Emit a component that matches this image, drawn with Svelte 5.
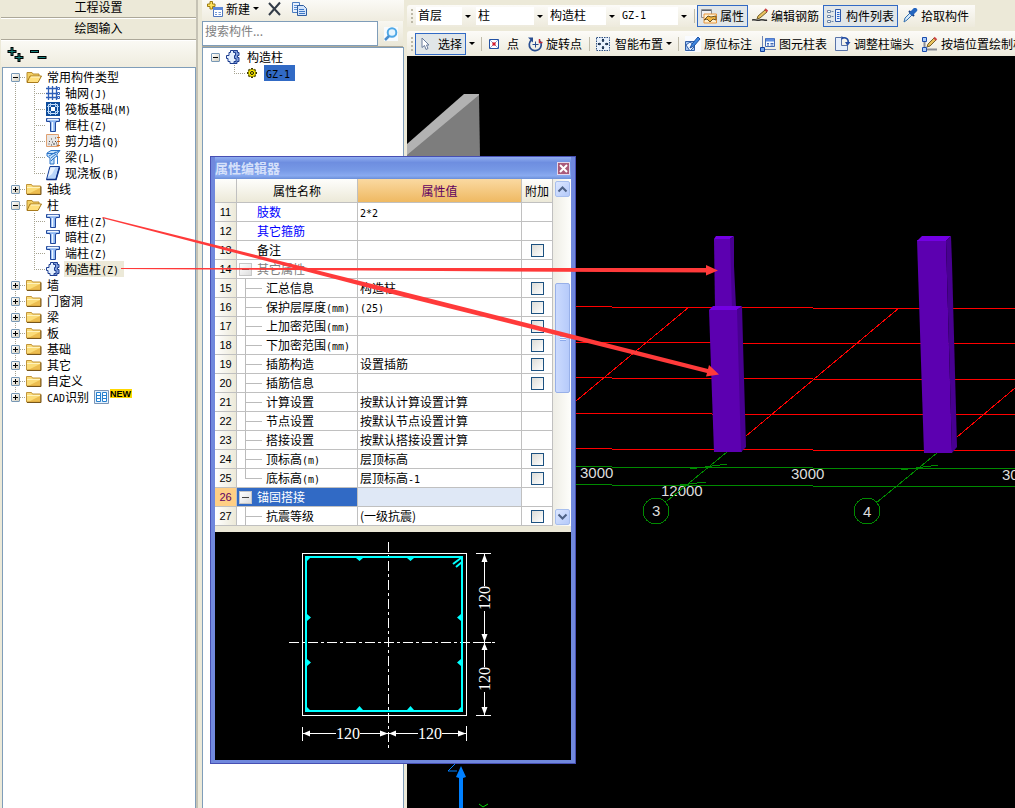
<script lang="ts">
  type Item = { label: string; key?: string; icon: string; selected?: boolean };
  type Group = { label: string; prefix?: string; open?: boolean; isNew?: boolean; children?: Item[] };
  type Row = {
    no: number;
    name: string;
    unit?: string;
    value?: string;
    extra?: string;
    kind?: "link" | "plain" | "group" | "child";
    last?: boolean;
    check?: boolean;
    selected?: boolean;
  };

  const groups: Group[] = [
    {
      label: "常用构件类型",
      open: true,
      children: [
        { label: "轴网", key: "(J)", icon: "grid" },
        { label: "筏板基础", key: "(M)", icon: "raft" },
        { label: "框柱", key: "(Z)", icon: "column" },
        { label: "剪力墙", key: "(Q)", icon: "wall" },
        { label: "梁", key: "(L)", icon: "beam" },
        { label: "现浇板", key: "(B)", icon: "slab" },
      ],
    },
    { label: "轴线" },
    {
      label: "柱",
      open: true,
      children: [
        { label: "框柱", key: "(Z)", icon: "column" },
        { label: "暗柱", key: "(Z)", icon: "column" },
        { label: "端柱", key: "(Z)", icon: "column" },
        { label: "构造柱", key: "(Z)", icon: "struct", selected: true },
      ],
    },
    { label: "墙" },
    { label: "门窗洞" },
    { label: "梁" },
    { label: "板" },
    { label: "基础" },
    { label: "其它" },
    { label: "自定义" },
    { label: "识别", prefix: "CAD", isNew: true },
  ];

  const rows: Row[] = [
    { no: 11, name: "肢数", extra: "2*2", kind: "link" },
    { no: 12, name: "其它箍筋", kind: "link" },
    { no: 13, name: "备注", kind: "plain", check: true },
    { no: 14, name: "其它属性", kind: "group" },
    { no: 15, name: "汇总信息", value: "构造柱", kind: "child", check: true },
    { no: 16, name: "保护层厚度", unit: "(mm)", extra: "(25)", kind: "child", check: true },
    { no: 17, name: "上加密范围", unit: "(mm)", kind: "child", check: true },
    { no: 18, name: "下加密范围", unit: "(mm)", kind: "child", check: true },
    { no: 19, name: "插筋构造", value: "设置插筋", kind: "child", check: true },
    { no: 20, name: "插筋信息", kind: "child", check: true },
    { no: 21, name: "计算设置", value: "按默认计算设置计算", kind: "child" },
    { no: 22, name: "节点设置", value: "按默认节点设置计算", kind: "child" },
    { no: 23, name: "搭接设置", value: "按默认搭接设置计算", kind: "child" },
    { no: 24, name: "顶标高", unit: "(m)", value: "层顶标高", kind: "child", check: true },
    { no: 25, name: "底标高", unit: "(m)", value: "层顶标高", extra: "-1", kind: "child", last: true, check: true },
    { no: 26, name: "锚固搭接", kind: "group", selected: true },
    { no: 27, name: "抗震等级", value: "(一级抗震)", kind: "child", check: true },
  ];

  const combos = [
    { label: "楼层", value: "首层", size: "short" },
    { label: "构件类别", value: "柱", size: "" },
    { label: "构件类型", value: "构造柱", size: "" },
    { label: "构件", value: "GZ-1", size: "code" },
  ];
</script>

{#snippet icon(name: string)}
  <svg class="icon" width="16" height="16" viewBox="0 0 16 16" aria-hidden="true">
    {#if name === "open"}
      <path d="M1 13V3.500h5l1 1.500h6v3" fill="#f3cf63" stroke="#b98d2e" />
      <path d="M1 13.500 4 7h11.500L12 13.500z" fill="#ffdf7c" stroke="#a87a1c" />
      <path d="M5 8h9" stroke="#fff7ce" />
    {:else if name === "folder"}
      <path d="M.5 13V3.500h5l1 1.500H14.500V13z" fill="#fbdc78" stroke="#c1943a" />
      <path d="M1 6.500h13" stroke="#fff3bd" />
      <path d="M14 7v6H2z" fill="#e2a836" opacity=".6" />
      <path d="M1 13.500h14v-8" fill="none" stroke="#77551a" />
    {:else if name === "grid"}
      <path d="M0 3.500h11M0 8.500h11M0 12.500h11M2.500 1v14M6.500 1v14M10.500 1v14" stroke="#2f5fb8" stroke-width="1.300" />
      <path d="M11.500 2.500h2v2h-2zM11.500 7.500h2v2h-2zM11.500 11.500h2v2h-2z" fill="#fff" stroke="#2f5fb8" />
    {:else if name === "raft"}
      <path d="M0 1h14v14H0z" fill="#0e4d9c" />
      <path d="M2.500 3.500h9v9h-9z" fill="none" stroke="#cfe4fb" />
      <path d="M5 6h4v4H5z" fill="#fff" />
      <path d="M4.500 2v4M9.500 2v4M4.500 10v4M9.500 10v4M1 5.500h4M1 10.500h4M9 5.500h4M9 10.500h4" stroke="#a9cdf4" />
    {:else if name === "column"}
      <path d="M.5 1.500h13v3H10v1H9.500v9h-5v-9H4v-1H.5z" fill="#8db7f3" stroke="#20479b" />
      <path d="M1.500 2.500h11M6.500 5v9" stroke="#eff6ff" stroke-width="1.500" />
    {:else if name === "wall"}
      <path d="M.5 1.500h12v12H.5z" fill="#e9e6e4" stroke="#e0a070" />
      <path d="M2.500 11h1M5 12h1M8 11h1M3 8.500h1M6 9h1M9 8.500h1M10.500 12h1M5 6h1M9 5h1M7 11h1M10 10h1" stroke="#444" />
      <path d="M11 4.500h3M11 8.500h3M11 12.500h3" stroke="#d06c22" />
    {:else if name === "beam"}
      <path d="M1 4 5 1.500h9L11 5v2L8 9v6H4V9L1 7z" fill="#c4e1fb" stroke="#2d75c9" />
      <path d="M1 4.500h7l5-2.500M3 7l7-4M5 9l5-4M5 12l3-3M11.500 7v8" stroke="#2d75c9" fill="none" />
    {:else if name === "slab"}
      <path d="M4 1.500h9.500L10 14.500H.5z" fill="#b9d4fa" stroke="#163f97" />
      <path d="M4.500 2.500h5L6 9l-4 3z" fill="#fff" opacity=".7" />
      <path d="M.5 14.500H10l3.500-12" fill="none" stroke="#0b2d85" stroke-width="1.500" />
    {:else if name === "struct"}
      <path d="M6 3.500h1.500V1.500h4v2H13v3h-1.500v2H13v4h-2v2H8" fill="#7f9ddb" stroke="#1d3d8f" />
      <path d="M3 3.500h1.500v-2h3v2h2v3H8.500v3h1.500v3h-2v2h-4v-2H2v-3H.5v-3H3z" fill="#e5f0fe" stroke="#1d3d8f" />
    {:else if name === "gear"}
      <path d="M6 3v10M1 8h10M2.500 4.500l7 7M9.500 4.500l-7 7" stroke="#3a3600" stroke-width="2" />
      <circle cx="6" cy="8" r="3.700" fill="#ffef00" stroke="#8a8000" />
      <circle cx="6" cy="8" r="1.500" fill="#ffef00" stroke="#111" />
    {:else if name === "new"}
      <path d="M6.500 6.500h9v9h-9z" fill="#fff" stroke="#4f75bd" />
      <path d="M6 6h10v3H6z" fill="#5d88d8" />
      <path d="M8 11.500h2M11.500 11.500h2.500M8 13.500h2M11.500 13.500h2.500" stroke="#7197d8" />
      <path d="M3 .5h2.500V3H8v2.500H5.500V8H3V5.500H.5V3H3z" fill="#ffe35b" stroke="#9c7b11" />
    {:else if name === "delete"}
      <path d="M2 2l11 12M13 1.500 2 14" stroke="#333c48" stroke-width="2" />
    {:else if name === "copy"}
      <path d="M1.500 1.500h7v10h-7z" fill="#e8f1fd" stroke="#4b7cc0" />
      <path d="M3 4.500h4M3 6.500h3M3 8.500h3" stroke="#5f91d4" />
      <path d="M6.500 4.500h6l3 3v7h-9z" fill="#d4e5fb" stroke="#2f5d9f" />
      <path d="M8 8.500h5M8 10.500h6M8 12.500h6" stroke="#3f78c5" />
    {:else if name === "search"}
      <path d="M1 1h14v14H1z" fill="#f7fbff" />
      <circle cx="9" cy="6.500" r="4.300" fill="#e6f5ff" stroke="#4fa8e6" stroke-width="2" />
      <path d="M6 10l-4 4" stroke="#4a8fce" stroke-width="2.500" />
    {:else if name === "props"}
      <path d="M.5 1.500h10v8H.5z" fill="#eef0f2" stroke="#8c8f94" />
      <path d="M1 2.500h9" stroke="#5b6067" />
      <path d="M3 6h12.500v9H3z" fill="#fff0cf" stroke="#e9963c" />
      <path d="M3 12l4-4 3 1 5-1v4l-3-1-3 3-3-3z" fill="#f4b63f" stroke="#6f5323" />
    {:else if name === "pencil"}
      <path d="M0 12c3-1 5 1 8 0s5 1 7 0" fill="none" stroke="#333" stroke-width="1.500" />
      <path d="M5 11l1-3 7-6 2 2-7 6z" fill="#e9c25d" stroke="#76602c" />
      <path d="M13 1l2.500 2.500" stroke="#c44" stroke-width="2" />
    {:else if name === "list"}
      <path d="M.5 2.500h3v2h-3zM.5 7.500h3v2h-3zM.5 12.500h3v2h-3z" fill="#fff" stroke="#6e86a8" />
      <path d="M4.500 3.500h2M4.500 8.500h2M4.500 13.500h2" stroke="#6e86a8" />
      <path d="M8.500 1.500h5v12h-5z" fill="#e8f0fd" stroke="#2b57ab" />
      <path d="M10 4.500h2.500M10 6.500h2.500M10 8.500h2.500M10 10.500h2.500" stroke="#2b65c9" />
    {:else if name === "dropper"}
      <path d="M2 14l1-4 6-6 2 2-6 6z" fill="#d5e9fa" stroke="#3671ae" />
      <path d="M7 3l5 5" stroke="#163e80" stroke-width="2" />
      <path d="M10 5l3-3" stroke="#2466c0" stroke-width="4.500" stroke-linecap="round" />
    {:else if name === "cursor"}
      <path d="M3 2v9.500l2.500-2 1.500 4 2-1-1.500-3.500H10z" fill="#fff" stroke="#6a7c9c" />
    {:else if name === "point"}
      <path d="M1.500 3.500h9v9h-9z" fill="#fff" stroke="#2351a3" />
      <path d="M2 4l8 8M10 4l-8 8" stroke="#8fa9d8" />
      <path d="M4.500 6.500l3 3M7.500 6.500l-3 3" stroke="#d3192b" stroke-width="1.500" />
    {:else if name === "rotate"}
      <path d="M4.500 4a6 6 0 1 0 8.500 1" fill="none" stroke="#294e91" stroke-width="1.700" />
      <path d="M1 1.500h5v5z" fill="#294e91" />
      <path d="M8.500 5.500v6M5.500 8.500h6" stroke="#294e91" />
      <path d="M12.500 3v3.500h3" fill="none" stroke="#bf2b35" stroke-width="1.500" />
    {:else if name === "smart"}
      <path d="M.5 1.500h13v13h-13z" fill="#e9f2fd" stroke="#2c4f83" stroke-dasharray="1.500 1" />
      <path d="M7 3v3M7 10v3M2 8h3M9 8h3" stroke="#102847" stroke-width="1.500" />
      <path d="M5.500 4.500 7 2.500l1.500 2zM5.500 11.500 7 13.500l1.500-2zM3.500 6.500 1.500 8l2 1.500zM10.500 6.500l2 1.500-2 1.500z" fill="#102847" />
    {:else if name === "label"}
      <path d="M0 0h16v16H0z" fill="#f9fbff" />
      <path d="M.5 5.500h9v9h-9z" fill="#a5c6f2" stroke="#315fa8" />
      <path d="M1 9l4-3 5 4-5 5z" fill="#eff6ff" stroke="#315fa8" />
      <path d="M5 12l2-4 6-7 2 2-6 7z" fill="#3d86e0" stroke="#1b4fa0" />
    {:else if name === "colTable"}
      <path d="M2.500 0v15M0 13.500h16" stroke="#7086b5" />
      <path d="M5.500 2.500h9v8h-9z" fill="#f7faff" stroke="#4169b4" />
      <path d="M6 4h8" stroke="#5f8de0" stroke-width="3" />
      <path d="M7 7.500h2M10.500 7.500h3M7 9h2M10.500 9h3" stroke="#4169b4" />
      <path d="M.5 11.500h4v4h-4z" fill="#74a7ee" stroke="#123f9b" />
    {:else if name === "adjust"}
      <path d="M.5 1.500h6v8h6v5H.5z" fill="#e7effb" stroke="#5973a8" />
      <path d="M7 2c4-1 7 1 6 5" fill="none" stroke="#1f49a0" stroke-width="1.500" />
      <path d="M10 6h5.500L12.500 10zM6.500 0v4L9 2z" fill="#284fa5" />
    {:else if name === "draw"}
      <path d="M2.500 1v14M1 13.500h14" stroke="#8b8e95" stroke-width="2" />
      <path d="M.5 1.500h4v4h-4zM.5 11.500h4v4h-4z" fill="#acd0fa" stroke="#1b4bac" />
      <path d="M5 11l1-3 6-6 2 2-6 6z" fill="#e9c25d" stroke="#76602c" />
      <path d="M12 1.500l2.500 2.500" stroke="#c44" stroke-width="2" />
    {/if}
  </svg>
{/snippet}

{#snippet tool(name: string, label: string, state: string)}
  <button class="tool {state}">{@render icon(name)}<span>{label}</span></button>
{/snippet}

<main class="app">
  <aside class="nav">
    <button class="tab">工程设置</button>
    <button class="tab second">绘图输入</button>
    <div class="nav-tools">
      <button aria-label="全部展开">
        <svg width="18" height="16" viewBox="0 0 18 16">
          <path d="M5 1v9M.5 5.500h9M12 7v9M7.500 11.500h9" stroke="#000" stroke-width="3" />
          <path d="M5 2v7M1.500 5.500h7M12 8v7M8.500 11.500h7" stroke="#16837c" />
        </svg>
      </button>
      <button aria-label="全部折叠">
        <svg width="18" height="16" viewBox="0 0 18 16">
          <path d="M0 5.500h9M7.500 11.500h9" stroke="#000" stroke-width="3" />
          <path d="M1 5.500h7M8.500 11.500h7" stroke="#16837c" />
        </svg>
      </button>
    </div>
    <div class="box">
      <ul class="tree root">
        {#each groups as group}
          <li>
            <div class="node">
              <button class="toggle" class:closed={!group.open} aria-label={group.label}></button>
              <i class="dash"></i>
              {@render icon(group.open ? "open" : "folder")}
              <span class="label">{#if group.prefix}<span class="latin">{group.prefix}</span>{/if}{group.label}</span>
              {#if group.isNew}
                <svg class="new-mark" width="38" height="16" viewBox="0 0 38 16" role="img">
                  <path d="M.5 1.500h14v13H.5z" fill="#e3f1fd" stroke="#7a94b5" />
                  <path d="M2.500 3.500h4v9h-4zM8.500 3.500h4v9h-4z" fill="#fff" stroke="#2580cf" />
                  <path d="M3 6.500h3M3 9.500h3M9 6.500h3M9 9.500h3" stroke="#2580cf" />
                  <path d="M16 0h22v9H16z" fill="#ffd800" />
                  <text x="16" y="8">NEW</text>
                </svg>
              {/if}
            </div>
            {#if group.children}
              <ul class="branch-list">
                {#each group.children as item}
                  <li class="node leaf">
                    <i class="dash"></i>
                    {@render icon(item.icon)}
                    <span class="label" class:current={item.selected}>{item.label}<span class="latin">{item.key}</span></span>
                  </li>
                {/each}
              </ul>
            {/if}
          </li>
        {/each}
      </ul>
    </div>
  </aside>

  <section class="parts">
    <div class="parts-tools">
      <button>{@render icon("new")}<span>新建</span><i class="caret"></i></button>
      <button aria-label="删除">{@render icon("delete")}</button>
      <button aria-label="复制">{@render icon("copy")}</button>
    </div>
    <div class="search">
      <input type="text" placeholder="搜索构件..." aria-label="搜索构件" />
      <button aria-label="搜索">{@render icon("search")}</button>
    </div>
    <div class="box">
      <ul class="tree">
        <li>
          <div class="node">
            <button class="toggle" aria-label="构造柱"></button>
            <i class="dash none"></i>
            {@render icon("struct")}
            <span class="label">构造柱</span>
          </div>
          <ul class="branch-list">
            <li class="node leaf">
              <i class="dash"></i>
              {@render icon("gear")}
              <span class="label picked"><span class="latin">GZ-1</span></span>
            </li>
          </ul>
        </li>
      </ul>
    </div>
  </section>

  <section class="work">
    <div class="bar top">
      <i class="grip"></i>
      <div class="combos">
        {#each combos as combo}
          <div class="combo {combo.size}">
            <select aria-label={combo.label}><option>{combo.value}</option></select>
            <i class="arrow"><i class="caret"></i></i>
          </div>
        {/each}
      </div>
      <i class="sep"></i>
      {@render tool("props", "属性", "on")}
      {@render tool("pencil", "编辑钢筋", "")}
      {@render tool("list", "构件列表", "on")}
      {@render tool("dropper", "拾取构件", "")}
    </div>
    <div class="bar">
      <i class="grip"></i>
      {@render tool("cursor", "选择", "on")}
      <button class="more" aria-label="选择方式"><i class="caret"></i></button>
      <i class="sep"></i>
      {@render tool("point", "点", "")}
      {@render tool("rotate", "旋转点", "")}
      <i class="sep"></i>
      {@render tool("smart", "智能布置", "split")}
      <button class="more" aria-label="布置方式"><i class="caret"></i></button>
      <i class="sep"></i>
      {@render tool("label", "原位标注", "")}
      {@render tool("colTable", "图元柱表", "")}
      {@render tool("adjust", "调整柱端头", "")}
      {@render tool("draw", "按墙位置绘制柱", "")}
    </div>
    <svg class="scene" role="img" aria-label="三维视图">
      <g transform="translate(-407 -56)">
        <path d="M407 144 464 94h15v2L407 156z" fill="#b2b2b2" />
        <path d="M479 95l1 62h-73v-2z" fill="#7d7d7d" />

        <g stroke="#f00" shape-rendering="crispEdges">
          <path d="M407 306 1015 309M407 342 1015 344M407 377 1015 380M407 413 1015 415M407 448 1015 451" />
          <path d="M576 401 689 307M746 436 899 308M957 437 1015 388" />
        </g>
        <g class="dims">
          <text x="580" y="478">3000</text>
          <text x="791" y="479">3000</text>
          <text x="1002" y="480">3000</text>
          <text x="661" y="496">12000</text>
          <text x="652" y="516">3</text>
          <text x="863" y="517">4</text>
        </g>
        <g stroke="#008a00" fill="none" shape-rendering="crispEdges">
          <path d="M407 466 1015 469M407 484 1015 487" />
          <path d="M690 469l37-5M672 486l34-4M901 470l37-5" />
          <path d="M727 452 667 501M937 453 876 503" />
          <circle cx="656" cy="511" r="13" />
          <circle cx="867" cy="511" r="13" />
        </g>

        <path d="M714 239h17l3 70h-19z" fill="#5c00b0" />
        <path d="M714 239l2-3h18l-4 3z" fill="#7400e4" />
        <path d="M730 239l4-3v30l2 41-4 2z" fill="#480091" />
        <path d="M709 310h29l4 142h-28z" fill="#5c00b0" />
        <path d="M709 310l4-4h29l-5 4z" fill="#7400e4" />
        <path d="M737 310l5-4 1 37 3 104-5 5z" fill="#480091" />
        <path d="M917 240h29l6 213h-28z" fill="#5c00b0" />
        <path d="M917 241l5-5h29l-5 5z" fill="#7400e4" />
        <path d="M946 241l5-5 1 27 5 184-5 6z" fill="#480091" />

        <path d="M457 762l-9 9h9" fill="none" stroke="#0080ff" />
        <path d="M456 777l5-11 5 11-3 1v30h-4v-30z" fill="#0080ff" />
        <path d="M479 804l4 3 5-3" fill="none" stroke="#0d0" />
      </g>
    </svg>
  </section>

  <section class="dialog" aria-label="属性编辑器">
    <header>
      <h2>属性编辑器</h2>
      <button class="close" aria-label="关闭">
        <svg width="9" height="9" viewBox="0 0 9 9"><path d="M1 1l7 7M8 1 1 8" stroke="#fff" stroke-width="2" /></svg>
      </button>
    </header>
    <div class="sheet">
      <table>
        <thead>
          <tr><th class="no"></th><th class="name">属性名称</th><th class="value">属性值</th><th class="extra">附加</th></tr>
        </thead>
        <tbody>
          {#each rows as row (row.no)}
            <tr class={row.kind} class:selected={row.selected}>
              <th>{row.no}</th>
              <td>
                <div class="cell">
                  {#if row.kind === "group"}
                    <button class="fold" aria-label={row.name}></button>
                  {:else if row.kind === "child"}
                    <i class="twig" class:last={row.last}></i>
                  {/if}
                  <span>{row.name}{#if row.unit}<span class="latin">{row.unit}</span>{/if}</span>
                </div>
              </td>
              <td class="val">{row.value ?? ""}{#if row.extra}<span class="latin">{row.extra}</span>{/if}</td>
              <td class="tick">
                {#if row.check}<input type="checkbox" aria-label="附加 {row.name}" />{/if}
              </td>
            </tr>
          {/each}
        </tbody>
      </table>
      <div class="scroll">
        <button aria-label="向上"><svg width="11" height="8" viewBox="0 0 11 8"><path d="M1.500 6.500l4-4 4 4" /></svg></button>
        <i class="thumb"></i>
        <button aria-label="向下"><svg width="11" height="8" viewBox="0 0 11 8"><path d="M1.500 1.500l4 4 4-4" /></svg></button>
      </div>
    </div>
    <svg class="section" viewBox="215 532 356 228" role="img" aria-label="截面">
      <g fill="none" stroke="#fff" shape-rendering="crispEdges">
        <path d="M302.500 553.500h164v162h-164z" />
        <path d="M388.500 542v206M289 642.500h207" stroke-dasharray="10 3 3 3" />
        <path d="M302.500 727v14M466.500 726v15M303 733.500h33M360 733.500h58M442 733.500h24" />
        <path d="M476 553.500h15M476 715.500h15M484.500 554v32M484.500 611v56M484.500 692v23M476 642.500h15" />
      </g>
      <path fill="#fff" d="M303 733.500l7-3v6zM388 733.500l-8-3v6zM389 733.500l7-3v6zM466 733.500l-8-3v6zM484.500 554l-3 8h6zM484.500 642l-3-8h6zM484.500 643l-3 7h6zM484.500 715l-3-8h6z" />
      <path d="M306 557h156v154H306z" fill="none" stroke="#0ff" stroke-width="2" />
      <path d="M453 564l8-6M456 567l6-5" stroke="#0ff" stroke-width="2" />
      <path fill="#0ff" d="M306 557h5l-5 5zM306 711h5l-5-5zM462 711h-5l5-5zM356 558h7l-3.500 3zM407 558h7l-3.500 3zM356 710h7l-3.500-4zM407 710h7l-3.500-4zM307 614v7l4-3.500zM307 659v7l4-3.500zM461 614v7l-4-3.500zM461 659v7l-4-3.500z" />
      <text x="336" y="739">120</text>
      <text x="418" y="739">120</text>
      <text transform="translate(490 610) rotate(-90)">120</text>
      <text transform="translate(490 691) rotate(-90)">120</text>
    </svg>
  </section>

  <svg class="marks" aria-hidden="true">
    <path d="M121 268h319l266 0v-3l12 5.500-12 5v-3l-266-1.500-319-2z" />
    <path d="M103 217 400 291l308 78 1-4 10 9.500-13 2 1-3.500L400 296 102 218z" />
  </svg>
</main>

<style>
  :global(body) { margin: 0; background: #ece9d8; }

  .app {
    --face: #ece9d8;
    --line: #aca899;
    --edge: #7f9db9;
    position: relative;
    display: grid;
    grid-template-columns: 198px 206px 1fr;
    height: 100vh;
    min-height: 768px;
    overflow: hidden;
    background: var(--face);
    color: #000;
    font: 12px/16px "Noto Sans CJK SC", sans-serif;
  }
  button { margin: 0; padding: 0; border: 0; background: none; color: inherit; font: inherit; }
  ul { list-style: none; margin: 0; padding: 0; }
  .latin { font-family: "DejaVu Sans Mono", monospace; font-size: 10px; line-height: 10px; }
  .icon { flex: none; display: block; }
  .caret { flex: none; width: 0; height: 0; border: 3px solid transparent; border-top-color: #000; border-bottom: 0; }

  /* left navigation */
  .nav { display: flex; flex-direction: column; padding-left: 1px; border-right: 2px solid #c5c2b4; }
  .tab { height: 18px; padding-bottom: 3px; border-bottom: 1px solid var(--line); line-height: 14px; }
  .tab.second { height: 22px; padding: 2px 0 4px; border-top: 1px solid #fff; }
  .nav-tools {
    display: flex; align-items: center; gap: 5px; height: 26px; padding-left: 6px;
    border-top: 1px solid #fff; background: linear-gradient(#faf9f4, #efecdf);
  }
  .nav-tools svg { display: block; }
  .box { flex: 1; margin-left: 1px; border: 1px solid var(--edge); border-bottom: 0; background: #fff; }
  .tree { padding-top: 1px; }
  .root { background: repeating-linear-gradient(#a5a28f 0 1px, transparent 1px 2px) 12px 9px / 1px calc(100% - 16px) no-repeat; }
  .node { display: flex; align-items: center; height: 16px; padding-left: 8px; }
  .toggle {
    flex: none; width: 9px; height: 9px; border: 1px solid #7898b5; border-radius: 1px;
    background:
      linear-gradient(#000, #000) 1px 3px / 5px 1px no-repeat,
      linear-gradient(135deg, #fff, #d5d0c0);
  }
  .toggle.closed {
    background:
      linear-gradient(#000, #000) 1px 3px / 5px 1px no-repeat,
      linear-gradient(#000, #000) 3px 1px / 1px 5px no-repeat,
      linear-gradient(135deg, #fff, #d5d0c0);
  }
  .dash { flex: none; width: 6px; height: 1px; background: repeating-linear-gradient(90deg, #a5a28f 0 1px, transparent 1px 2px); }
  .dash.none { background: none; }
  .label { margin-left: 4px; padding: 0 1px; white-space: nowrap; }
  .branch-list { background: repeating-linear-gradient(#a5a28f 0 1px, transparent 1px 2px) 31px 0 / 1px calc(100% - 8px) no-repeat; }
  .leaf { padding-left: 31px; }
  .leaf .dash { width: 12px; }
  .leaf .label { margin-left: 2px; }
  .label.current { padding-right: 5px; background: var(--face); }
  .label.picked { padding: 0 5px 0 2px; background: #316ac5; }
  .new-mark { margin-left: 4px; }
  .new-mark text { font: bold 9px "Liberation Sans", sans-serif; }

  /* component list */
  .parts { display: flex; flex-direction: column; padding: 0 0 0 4px; }
  .parts-tools {
    display: flex; align-items: center; gap: 8px; height: 17px; padding: 0 0 4px 5px;
    background: linear-gradient(#fbfaf6, #efecdf);
  }
  .parts-tools button { display: flex; align-items: center; gap: 3px; }
  .search { display: flex; height: 25px; margin-right: 1px; border-bottom: 1px solid var(--line); }
  .search input {
    flex: 1; min-width: 0; box-sizing: border-box; margin: 0; padding: 0 2px 5px; border: 1px solid var(--edge);
    background: #fff; font: inherit; border-radius: 0;
  }
  .search input::placeholder { color: #808080; opacity: 1; }
  .search button { width: 25px; padding-left: 5px; background: linear-gradient(#f8f7f1, #e9e6d6); }
  .parts .box { margin: 0; }

  /* toolbars and view */
  .work { display: flex; flex-direction: column; min-width: 0; padding: 5px 0 0 3px; }
  .bar {
    display: flex; align-items: center; height: 25px; padding-left: 4px; overflow: hidden;
    border-radius: 3px 0 0 0; background: linear-gradient(#fcfbf8, #edeadc);
  }
  .bar.top { align-self: flex-start; height: 22px; margin-bottom: 4px; padding-right: 2px; }
  .grip { flex: none; width: 2px; height: 14px; margin-right: 2px; background: repeating-linear-gradient(#bdb9a8 0 2px, transparent 2px 4px); }
  .combos { display: flex; gap: 3px; margin: 0 2px 0 1px; }
  .combo { display: grid; width: 69px; height: 18px; background: #fff; }
  .combo.short { width: 57px; }
  .combo select {
    grid-area: 1 / 1; min-width: 0; padding: 0 12px 2px 2px; border: 0; background: none;
    color: #000; font: inherit; appearance: none;
  }
  .combo.code select { padding-bottom: 0; font: 10px/16px "DejaVu Sans Mono", monospace; }
  .combo .arrow {
    grid-area: 1 / 1; justify-self: end; display: flex; align-items: center; justify-content: center;
    width: 11px; background: linear-gradient(#faf9f4, #efecdf); pointer-events: none;
  }
  .sep { flex: none; width: 1px; height: 14px; margin: 0 2px 0 3px; background: #c0bcab; }
  .tool {
    flex: none; display: flex; align-items: center; gap: 3px; height: 22px; padding: 0 3px;
    box-sizing: border-box; border: 1px solid transparent; white-space: nowrap;
  }
  .tool.on { border-color: #316ac5; background: #e1e6e8; }
  .tool.split { padding-right: 0; border-right: 0; }
  .more { flex: none; display: flex; align-items: center; justify-content: center; width: 12px; height: 20px; }
  .scene { flex: 1; display: block; width: 100%; min-height: 0; background: #000; }
  .dims text { fill: #ddd; font: 15px "Liberation Sans", sans-serif; }

  /* property window */
  .dialog {
    position: absolute; left: 210px; top: 156px; width: 366px; box-sizing: border-box;
    padding: 0 4px 3px; border: 1px solid #474fb3; background: #7088dd;
  }
  .dialog header {
    display: flex; align-items: center; justify-content: space-between; height: 22px;
    background: linear-gradient(#91aef0, #6e8ee0 25%, #7799e6 60%, #89aaf0 85%, #6b8fd8);
  }
  .dialog h2 { margin: 0; color: #d6e1fa; font-size: 13px; line-height: 18px; }
  .close {
    display: flex; align-items: center; justify-content: center; width: 13px; height: 13px;
    margin-right: 1px; box-sizing: border-box; border: 1px solid #e4d8ec; background: #aa5a7a;
  }
  .sheet { display: flex; border-bottom: 6px solid var(--face); background: #fff; }
  table { width: 338px; border-collapse: separate; border-spacing: 0; table-layout: fixed; line-height: 16px; }
  th, td { height: 18px; padding: 0; border: solid #c0c0c0; border-width: 0 1px 1px 0; font-weight: normal; text-align: left; }
  thead th { height: 23px; background: linear-gradient(#fefefc, #ece9d8); text-align: center; }
  thead .no { width: 21px; }
  thead .name { width: 120px; }
  thead .value { width: 163px; background: linear-gradient(#fad9a1, #efb962); color: #600060; }
  thead .extra { width: 30px; }
  tbody th { background: linear-gradient(90deg, #fff, #ece9d8); font: 11px/16px "Liberation Sans", sans-serif; text-align: center; }
  .cell { display: flex; align-items: center; height: 18px; padding-left: 20px; white-space: nowrap; }
  .link .cell { color: #00f; }
  .group .cell { gap: 5px; padding-left: 2px; color: #808080; }
  .child .cell { padding-left: 8px; }
  .fold {
    flex: none; width: 13px; height: 13px; box-sizing: border-box; border: 1px solid #c6c6c6;
    background: linear-gradient(#444, #444) 2px 5px / 7px 1px no-repeat, linear-gradient(135deg, #fff, #ddd);
  }
  .twig {
    flex: none; width: 17px; height: 18px; margin-right: 4px;
    background: linear-gradient(#bbb, #bbb) 0 0 / 1px 100% no-repeat, linear-gradient(#bbb, #bbb) 0 9px / 17px 1px no-repeat;
  }
  .twig.last { background-size: 1px 10px, 17px 1px; }
  .val { padding-left: 2px; white-space: nowrap; }
  .tick input {
    display: block; width: 13px; height: 13px; margin: 0 auto; appearance: none;
    border: 1px solid #1c5180; background: linear-gradient(135deg, #dcdcd7, #fff);
  }
  .selected th { background: #ffcf85; color: #600060; }
  .selected .cell { background: #316ac5; color: #fff; }
  .selected .val { background: #dfe8f6; }
  .scroll { flex: 1; display: flex; flex-direction: column; align-items: center; padding: 2px 0 1px; background: linear-gradient(90deg, #eeede5, #fefefb); }
  .scroll button {
    display: flex; align-items: center; justify-content: center; width: 15px; height: 16px;
    box-sizing: border-box; border: 1px solid #a8bfee; border-radius: 2px; background: linear-gradient(135deg, #dce7ff, #b5cafa);
  }
  .scroll path { fill: none; stroke: #4d6185; stroke-width: 2; }
  .thumb {
    width: 13px; height: 108px; margin: 86px 0 auto; border: 1px solid #98b0e8; border-radius: 2px;
    background:
      repeating-linear-gradient(#eef4ff 0 1px, #8caaec 1px 2px) 4px 51px / 6px 6px no-repeat,
      linear-gradient(90deg, #cbdafd, #b6cafa);
  }
  .section { display: block; width: 100%; background: #000; }
  .section text { fill: #fff; font: 16px "Liberation Serif", serif; }

  .marks { position: absolute; inset: 0; width: 100%; height: 100%; pointer-events: none; fill: #ff3a3a; }
</style>
